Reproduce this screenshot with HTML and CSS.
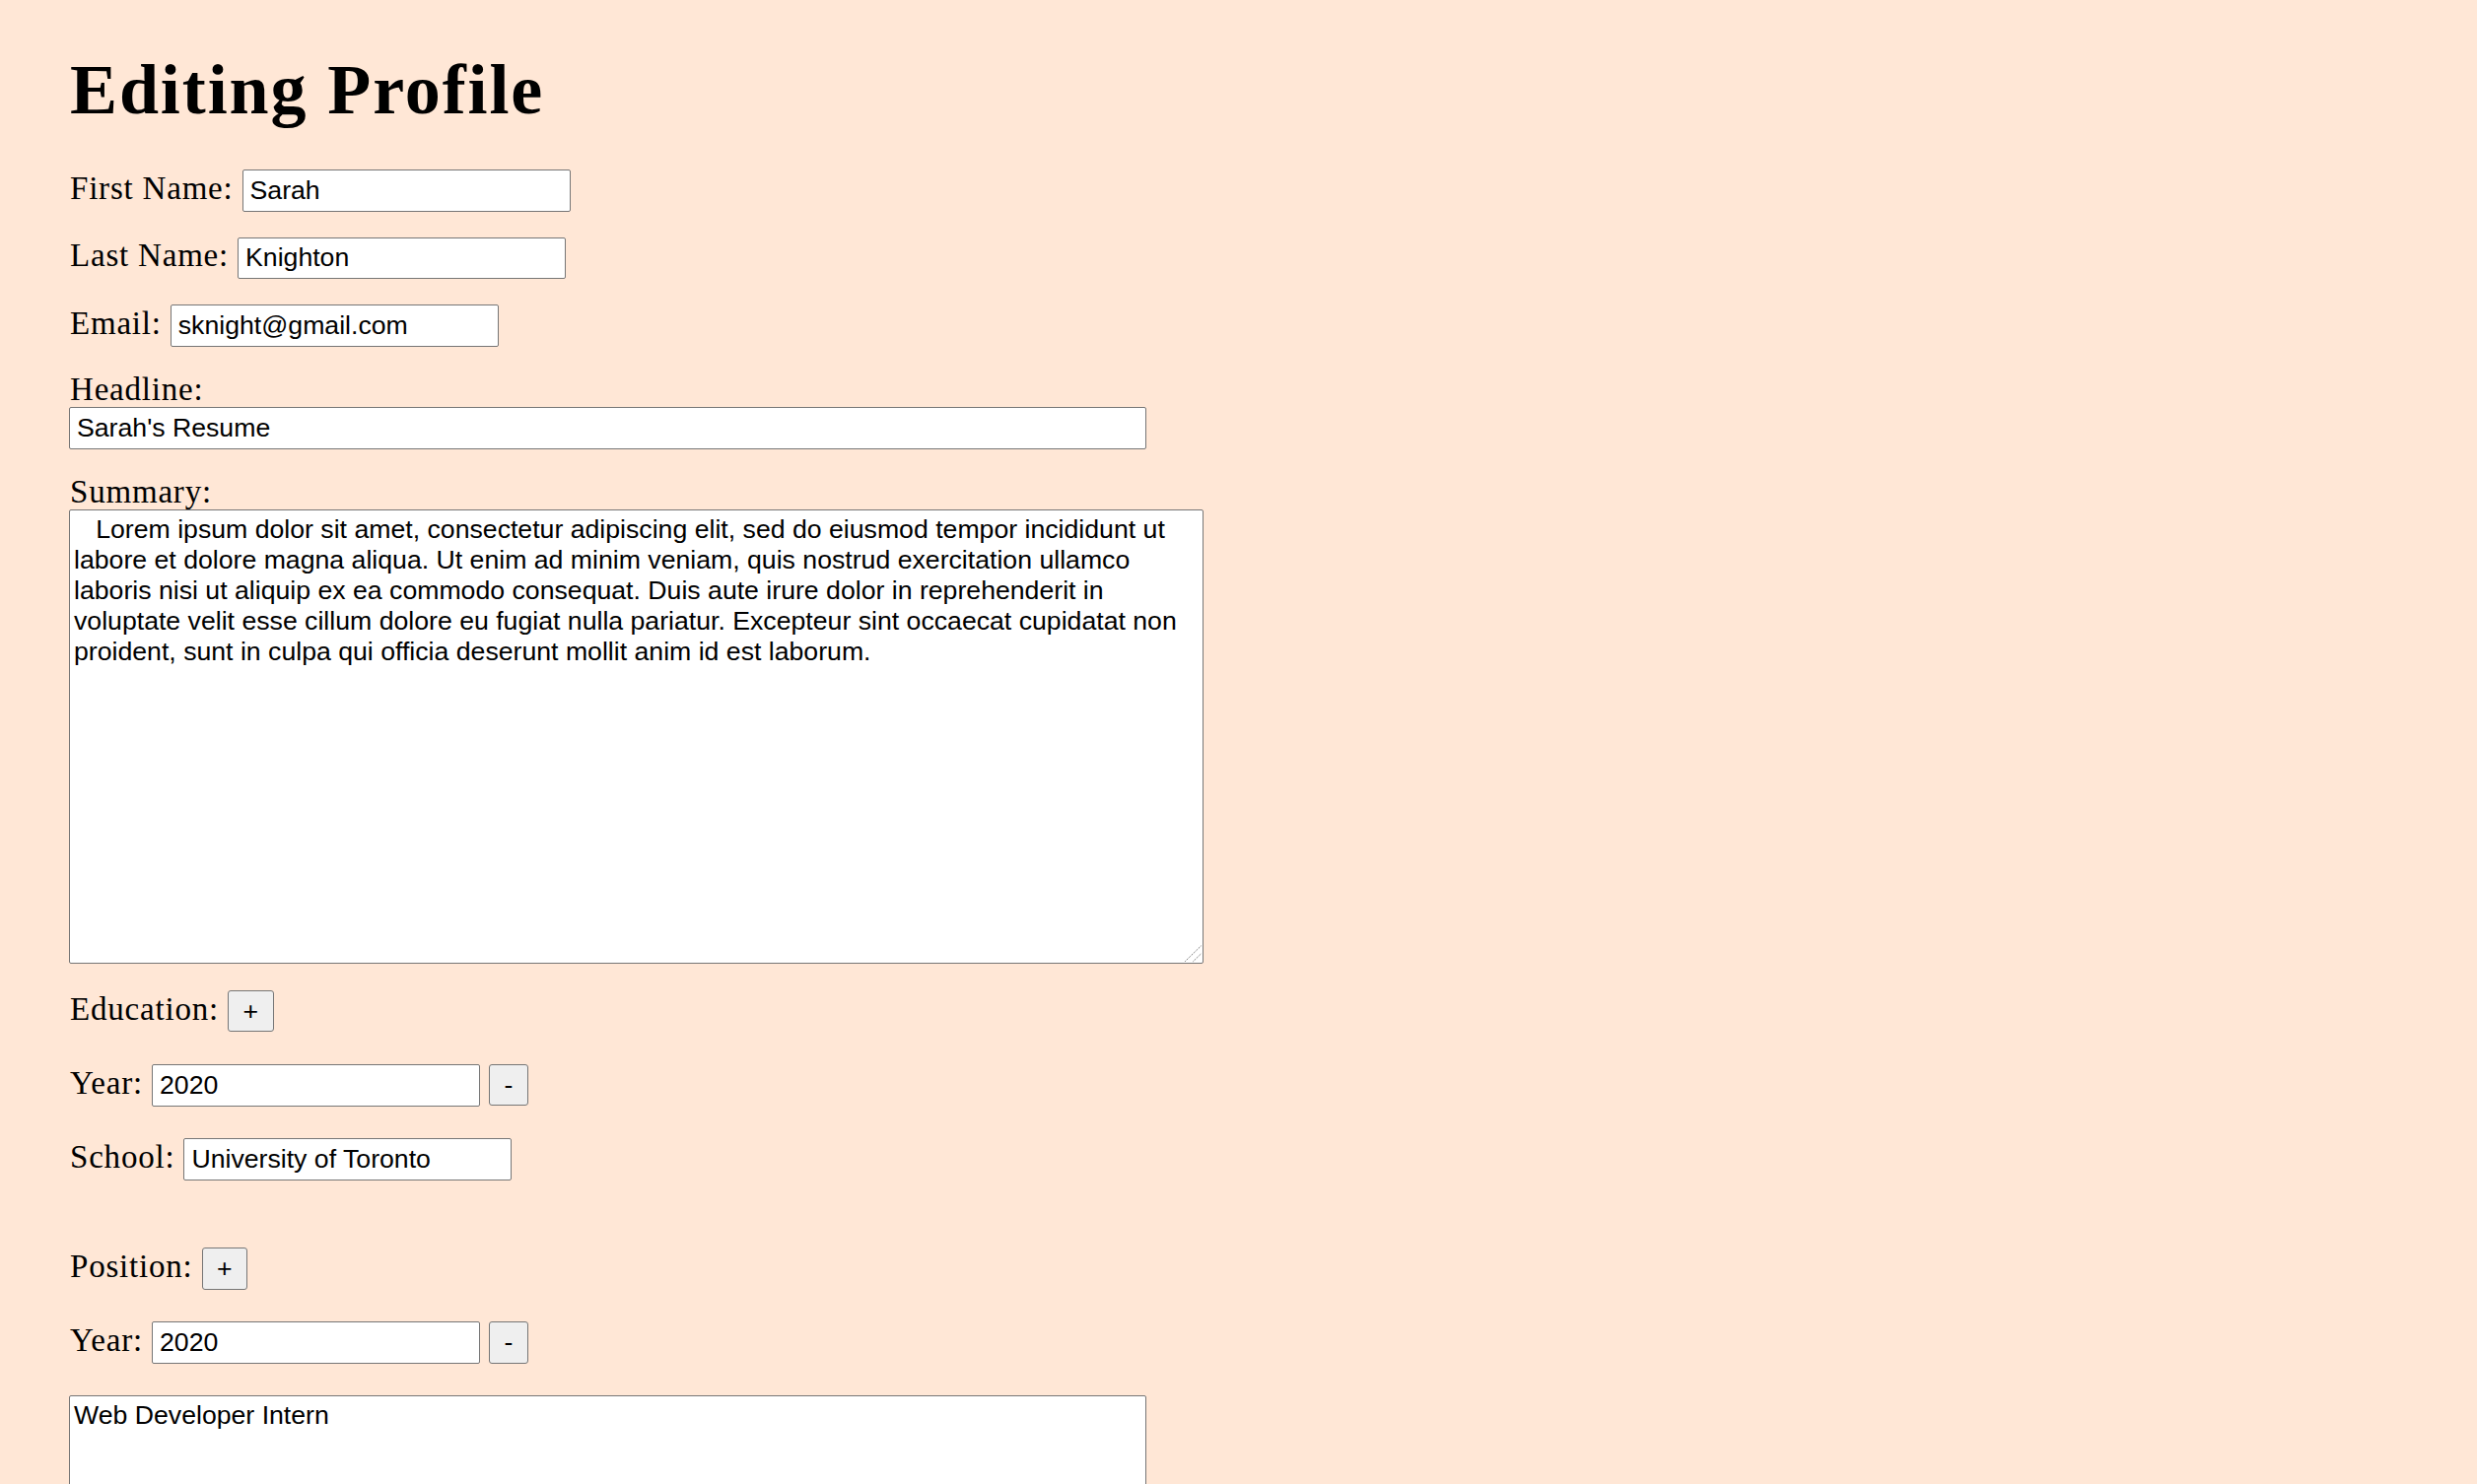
FILE: index.html
```html
<!DOCTYPE html>
<html lang="en">
<head>
<meta charset="utf-8">
<title>Editing Profile</title>
<link rel="stylesheet" href="styles.css">
</head>
<body>
<main class="page">
  <h1 class="title">Editing Profile</h1>

  <div class="row gap-s">
    <label class="lbl" for="fn">First Name:</label>
    <input class="field" id="fn" type="text" value="Sarah">
  </div>
  <div class="row gap-s">
    <label class="lbl" for="ln">Last Name:</label>
    <input class="field" id="ln" type="text" value="Knighton">
  </div>
  <div class="row gap-m">
    <label class="lbl" for="em">Email:</label>
    <input class="field" id="em" type="text" value="sknight@gmail.com">
  </div>

  <label class="lbl block" for="hl">Headline:</label>
  <input class="field wide gap-m" id="hl" type="text" value="Sarah's Resume">

  <label class="lbl block" for="sm">Summary:</label>
  <div class="area-wrap">
    <textarea class="area summary" id="sm">   Lorem ipsum dolor sit amet, consectetur adipiscing elit, sed do eiusmod tempor incididunt ut labore et dolore magna aliqua. Ut enim ad minim veniam, quis nostrud exercitation ullamco laboris nisi ut aliquip ex ea commodo consequat. Duis aute irure dolor in reprehenderit in voluptate velit esse cillum dolore eu fugiat nulla pariatur. Excepteur sint occaecat cupidatat non proident, sunt in culpa qui officia deserunt mollit anim id est laborum.</textarea>
    <svg class="grip" width="20" height="20" viewBox="0 0 20 20" aria-hidden="true">
      <line x1="1.2" y1="17.8" x2="17.6" y2="1.8"/>
      <line x1="9.4" y1="17.8" x2="17.6" y2="9.8"/>
    </svg>
  </div>

  <div class="row gap-l">
    <span class="lbl">Education:</span>
    <button class="btn" type="button">+</button>
  </div>
  <div class="row gap-l">
    <label class="lbl" for="ey">Year:</label>
    <input class="field" id="ey" type="text" value="2020">
    <button class="btn" type="button">-</button>
  </div>
  <div class="row gap-xl">
    <label class="lbl" for="es">School:</label>
    <input class="field" id="es" type="text" value="University of Toronto">
  </div>

  <div class="row gap-l">
    <span class="lbl">Position:</span>
    <button class="btn" type="button">+</button>
  </div>
  <div class="row gap-l">
    <label class="lbl" for="py">Year:</label>
    <input class="field" id="py" type="text" value="2020">
    <button class="btn" type="button">-</button>
  </div>
  <textarea class="area position" aria-label="Position description">Web Developer Intern</textarea>
</main>
</body>
</html>
```

FILE: styles.css
```css
html {
  overflow: hidden;
}

body {
  margin: 0;
  background: #ffe7d6;
  color: #000;
  font-family: "Liberation Serif", "Times New Roman", serif;
}

.page {
  padding: 51px 70px 0 70px;
}

.title {
  margin: 0 0 41px 0;
  font-family: "Liberation Serif", "Times New Roman", serif;
  font-weight: 700;
  font-size: 72px;
  line-height: 80px;
  letter-spacing: 1.9px;
  padding-left: 1px;
}

.row {
  display: flex;
  align-items: baseline;
  gap: 9px;
}

.lbl {
  font-family: "Liberation Serif", "Times New Roman", serif;
  font-size: 33px;
  line-height: 36px;
  letter-spacing: 0.8px;
  padding-left: 1px;
}

.lbl.block {
  display: block;
}

.field {
  display: block;
  box-sizing: border-box;
  width: 333px;
  height: 42.6px;
  margin: 0;
  padding: 0 7px;
  border: 1px solid #767676;
  border-radius: 2px;
  background: #fff;
  color: #000;
  font-family: "Liberation Sans", Arial, sans-serif;
  font-size: 26.67px;
  line-height: 30.6px;
  outline: none;
}

.field.wide {
  width: 1093px;
}

.btn {
  box-sizing: border-box;
  height: 42.6px;
  margin: 0;
  padding: 0 14.5px;
  border: 1px solid #767676;
  border-radius: 3px;
  background: #efefef;
  color: #000;
  font-family: "Liberation Sans", Arial, sans-serif;
  font-size: 26.67px;
  line-height: 30.6px;
}

.area-wrap {
  position: relative;
  width: 1151px;
  margin-bottom: 26.4px;
}

.area {
  display: block;
  box-sizing: border-box;
  margin: 0;
  padding: 4px 4px 3px 4px;
  border: 1px solid #767676;
  border-radius: 2px;
  background: #fff;
  color: #000;
  font-family: "Liberation Sans", Arial, sans-serif;
  font-size: 26.67px;
  line-height: 31px;
  outline: none;
}

.area.summary {
  width: 1151px;
  height: 461px;
  resize: none;
}

.grip {
  position: absolute;
  right: 0;
  bottom: 0;
  stroke: #767676;
  stroke-width: 1;
  stroke-dasharray: 1.4 1;
}

.area.position {
  width: 1093px;
  height: 200px;
}

.gap-s {
  margin-bottom: 26px;
}

.gap-m {
  margin-bottom: 25.5px;
}

.gap-l {
  margin-bottom: 32.4px;
}

.gap-xl {
  margin-bottom: 68.4px;
}
```
